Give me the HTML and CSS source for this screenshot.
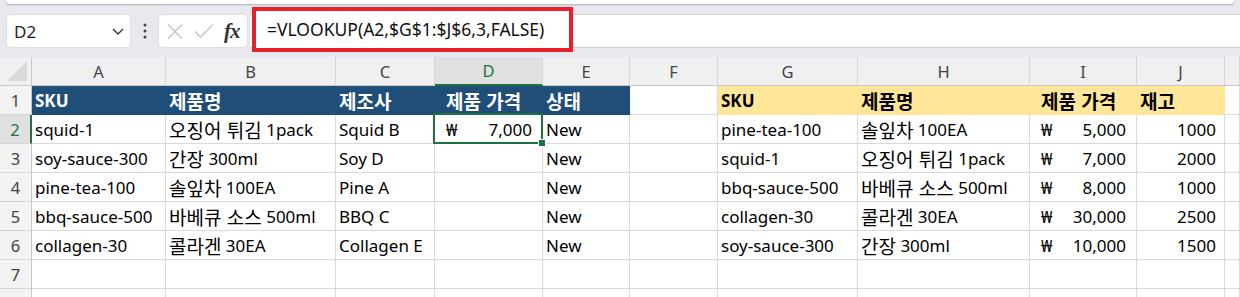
FILE: index.html
```html
<!DOCTYPE html>
<html lang="ko">

<head>
    <meta charset="UTF-8">
    <meta name="viewport" content="width=device-width, initial-scale=1.0">
    <title>VLOOKUP</title>
    <link rel="stylesheet" href="styles.css">
</head>

<body>
    <div class="app">
        <!-- 리본 아래쪽 가장자리 -->
        <div class="ribbon-edge"></div>

        <!-- 수식 입력줄 -->
        <div class="formula-bar">
            <div class="name-box">
                <span>D2</span>
                <svg width="12" height="7" viewBox="0 0 12 7"><path d="M1 1l5 5 5-5" fill="none" stroke="#333" stroke-width="1.4"/></svg>
            </div>
            <div class="dots">
                <svg width="4" height="16" viewBox="0 0 4 16"><circle cx="2" cy="2" r="1.5" fill="#444"/><circle cx="2" cy="8" r="1.5" fill="#444"/><circle cx="2" cy="14" r="1.5" fill="#444"/></svg>
            </div>
            <div class="fx-box">
                <svg width="16" height="15" viewBox="0 0 16 15"><path d="M1 0.5l14 14M15 0.5l-14 14" fill="none" stroke="#c4c4c4" stroke-width="1.3"/></svg>
                <svg width="20" height="14" viewBox="0 0 20 14"><path d="M1 7.5l5.5 5.5L19 0.5" fill="none" stroke="#c4c4c4" stroke-width="1.3"/></svg>
                <span class="fx">fx</span>
            </div>
            <div class="formula-input">
                <div class="mark">=VLOOKUP(A2,$G$1:$J$6,3,FALSE)</div>
            </div>
        </div>

        <!-- 시트 -->
        <div class="sheet">
            <div class="row heads">
                <div class="corner"><svg width="20" height="20" viewBox="0 0 20 20"><path d="M20 0V20H0z" fill="#d9d9d9"/></svg></div>
                <div class="ch">A</div>
                <div class="ch">B</div>
                <div class="ch">C</div>
                <div class="ch active">D</div>
                <div class="ch">E</div>
                <div class="ch">F</div>
                <div class="ch">G</div>
                <div class="ch">H</div>
                <div class="ch">I</div>
                <div class="ch">J</div>
                <div class="ch"></div>
            </div>

            <div class="row">
                <div class="rh">1</div>
                <div class="c blue">SKU</div>
                <div class="c blue"><span class="ko">제품명</span></div>
                <div class="c blue"><span class="ko">제조사</span></div>
                <div class="c blue pad"><span class="ko">제품 가격</span></div>
                <div class="c blue"><span class="ko">상태</span></div>
                <div class="c"></div>
                <div class="c yellow">SKU</div>
                <div class="c yellow"><span class="ko">제품명</span></div>
                <div class="c yellow pad"><span class="ko">제품 가격</span></div>
                <div class="c yellow"><span class="ko">재고</span></div>
                <div class="c"></div>
            </div>

            <div class="row">
                <div class="rh active">2</div>
                <div class="c">squid-1</div>
                <div class="c"><span class="ko">오징어 튀김</span>&nbsp;1pack</div>
                <div class="c">Squid B</div>
                <div class="c acct selected"><span>₩</span><span>7,000</span></div>
                <div class="c">New</div>
                <div class="c"></div>
                <div class="c">pine-tea-100</div>
                <div class="c"><span class="ko">솔잎차</span>&nbsp;100EA</div>
                <div class="c acct"><span>₩</span><span>5,000</span></div>
                <div class="c num">1000</div>
                <div class="c"></div>
            </div>

            <div class="row">
                <div class="rh">3</div>
                <div class="c">soy-sauce-300</div>
                <div class="c"><span class="ko">간장</span>&nbsp;300ml</div>
                <div class="c">Soy D</div>
                <div class="c"></div>
                <div class="c">New</div>
                <div class="c"></div>
                <div class="c">squid-1</div>
                <div class="c"><span class="ko">오징어 튀김</span>&nbsp;1pack</div>
                <div class="c acct"><span>₩</span><span>7,000</span></div>
                <div class="c num">2000</div>
                <div class="c"></div>
            </div>

            <div class="row">
                <div class="rh">4</div>
                <div class="c">pine-tea-100</div>
                <div class="c"><span class="ko">솔잎차</span>&nbsp;100EA</div>
                <div class="c">Pine A</div>
                <div class="c"></div>
                <div class="c">New</div>
                <div class="c"></div>
                <div class="c">bbq-sauce-500</div>
                <div class="c"><span class="ko">바베큐 소스</span>&nbsp;500ml</div>
                <div class="c acct"><span>₩</span><span>8,000</span></div>
                <div class="c num">1000</div>
                <div class="c"></div>
            </div>

            <div class="row">
                <div class="rh">5</div>
                <div class="c">bbq-sauce-500</div>
                <div class="c"><span class="ko">바베큐 소스</span>&nbsp;500ml</div>
                <div class="c">BBQ C</div>
                <div class="c"></div>
                <div class="c">New</div>
                <div class="c"></div>
                <div class="c">collagen-30</div>
                <div class="c"><span class="ko">콜라겐</span>&nbsp;30EA</div>
                <div class="c acct"><span>₩</span><span>30,000</span></div>
                <div class="c num">2500</div>
                <div class="c"></div>
            </div>

            <div class="row">
                <div class="rh">6</div>
                <div class="c">collagen-30</div>
                <div class="c"><span class="ko">콜라겐</span>&nbsp;30EA</div>
                <div class="c">Collagen E</div>
                <div class="c"></div>
                <div class="c">New</div>
                <div class="c"></div>
                <div class="c">soy-sauce-300</div>
                <div class="c"><span class="ko">간장</span>&nbsp;300ml</div>
                <div class="c acct"><span>₩</span><span>10,000</span></div>
                <div class="c num">1500</div>
                <div class="c"></div>
            </div>

            <div class="row">
                <div class="rh">7</div>
                <div class="c"></div><div class="c"></div><div class="c"></div><div class="c"></div><div class="c"></div>
                <div class="c"></div><div class="c"></div><div class="c"></div><div class="c"></div><div class="c"></div>
                <div class="c"></div>
            </div>

            <div class="row">
                <div class="rh"></div>
                <div class="c"></div><div class="c"></div><div class="c"></div><div class="c"></div><div class="c"></div>
                <div class="c"></div><div class="c"></div><div class="c"></div><div class="c"></div><div class="c"></div>
                <div class="c"></div>
            </div>
        </div>
    </div>
</body>

</html>
```

FILE: styles.css
```css
* {
    margin: 0;
    padding: 0;
    box-sizing: border-box;
}

html,
body {
    width: 1240px;
    height: 297px;
    overflow: hidden;
    background: #e7e9ee;
}

body {
    font-family: "Noto Sans", "Noto Sans CJK KR", sans-serif;
    color: #000;
}

.app {
    width: 1240px;
}

/* 리본 가장자리 */
.ribbon-edge {
    height: 4px;
    margin: 0 6px;
    background: #fff;
    border-radius: 0 0 6px 6px;
    box-shadow: 0 1px 2px rgba(0, 0, 0, .25);
}

/* 수식 입력줄 */
.formula-bar {
    display: flex;
    align-items: center;
    height: 34px;
    margin-top: 10px;
    padding-left: 6px;
}

.name-box {
    display: flex;
    align-items: center;
    justify-content: space-between;
    width: 125px;
    height: 34px;
    padding: 0 6px 0 7px;
    background: #fff;
    border: 1px solid #e0e0e0;
    border-radius: 5px;
    font-size: 17px;
    color: #222;
}

.dots {
    display: flex;
    align-items: center;
    justify-content: center;
    width: 27px;
    height: 34px;
}

.fx-box {
    display: flex;
    align-items: center;
    width: 90px;
    height: 34px;
    padding-left: 8px;
    gap: 11px;
    background: #fff;
    border: 1px solid #e0e0e0;
    border-radius: 5px;
}

.fx-box .fx {
    font-family: "Liberation Serif", serif;
    font-style: italic;
    font-weight: bold;
    font-size: 21px;
    letter-spacing: -1px;
    color: #333;
    margin-left: -1px;
}

.formula-input {
    flex: 1;
    position: relative;
    height: 34px;
    margin-left: 2px;
    background: #fff;
    border-top: 1px solid #d0d0d0;
    border-bottom: 1px solid #d0d0d0;
}

/* 빨간 강조 상자 */
.formula-input .mark {
    position: absolute;
    left: 2px;
    top: -8px;
    width: 321px;
    height: 45px;
    padding-left: 11px;
    border: 4px solid #e8202a;
    background: #fff;
    font-size: 17.5px;
    line-height: 36px;
    color: #111;
}

/* 시트 */
.sheet {
    margin-top: 9px;
    background: #fff;
}

.row {
    display: grid;
    grid-template-columns: 32px 134px 170px 99px 108px 87px 88px 140px 172px 107px 88px 1fr;
    height: 29px;
}

.corner,
.ch,
.rh {
    display: flex;
    align-items: center;
    justify-content: center;
    background: #f0f0f0;
    border-right: 1px solid #d6d6d6;
    border-bottom: 1px solid #c8c8c8;
    font-size: 16.5px;
    color: #444;
}

.corner {
    align-items: flex-end;
    justify-content: flex-end;
    padding: 0 4px 4px 0;
    border-right: 1px solid #c8c8c8;
}

.ch.active {
    background: #e0e0e0;
    color: #1e7145;
    border-bottom: 2px solid #1e7145;
}

.rh {
    background: #f3f3f3;
    border-bottom: 1px solid #d6d6d6;
    border-right: 1px solid #c8c8c8;
}

.rh.active {
    color: #1e7145;
    background: #e0e0e0;
    border-right: 2px solid #1e7145;
}

.c {
    display: flex;
    align-items: center;
    padding: 1px 3px 0;
    border-right: 1px solid #dadada;
    border-bottom: 1px solid #dadada;
    font-size: 17px;
    white-space: nowrap;
    overflow: visible;
}

/* 한글은 조금 더 크게 */
.c .ko {
    font-family: "Noto Sans CJK KR", sans-serif;
    font-size: 19px;
}

.c.blue {
    background: #1f4e78;
    border-color: #1f4e78;
    color: #fff;
    font-weight: bold;
}

.c.yellow {
    background: #ffe699;
    border-color: #ffe699;
    font-weight: bold;
}

.c.pad {
    padding-left: 11px;
}

.c.num {
    justify-content: flex-end;
    padding-right: 8px;
}

.c.acct {
    justify-content: space-between;
    padding: 1px 10px 0 11px;
}

/* 선택된 셀 */
.c.selected {
    position: relative;
}

.c.selected::before {
    content: "";
    position: absolute;
    left: -2px;
    top: -2px;
    right: -1px;
    bottom: -1px;
    border: 2px solid #1e7145;
}

.c.selected::after {
    content: "";
    position: absolute;
    right: -4px;
    bottom: -4px;
    width: 6px;
    height: 6px;
    background: #1e7145;
    border: 1px solid #fff;
}
```
